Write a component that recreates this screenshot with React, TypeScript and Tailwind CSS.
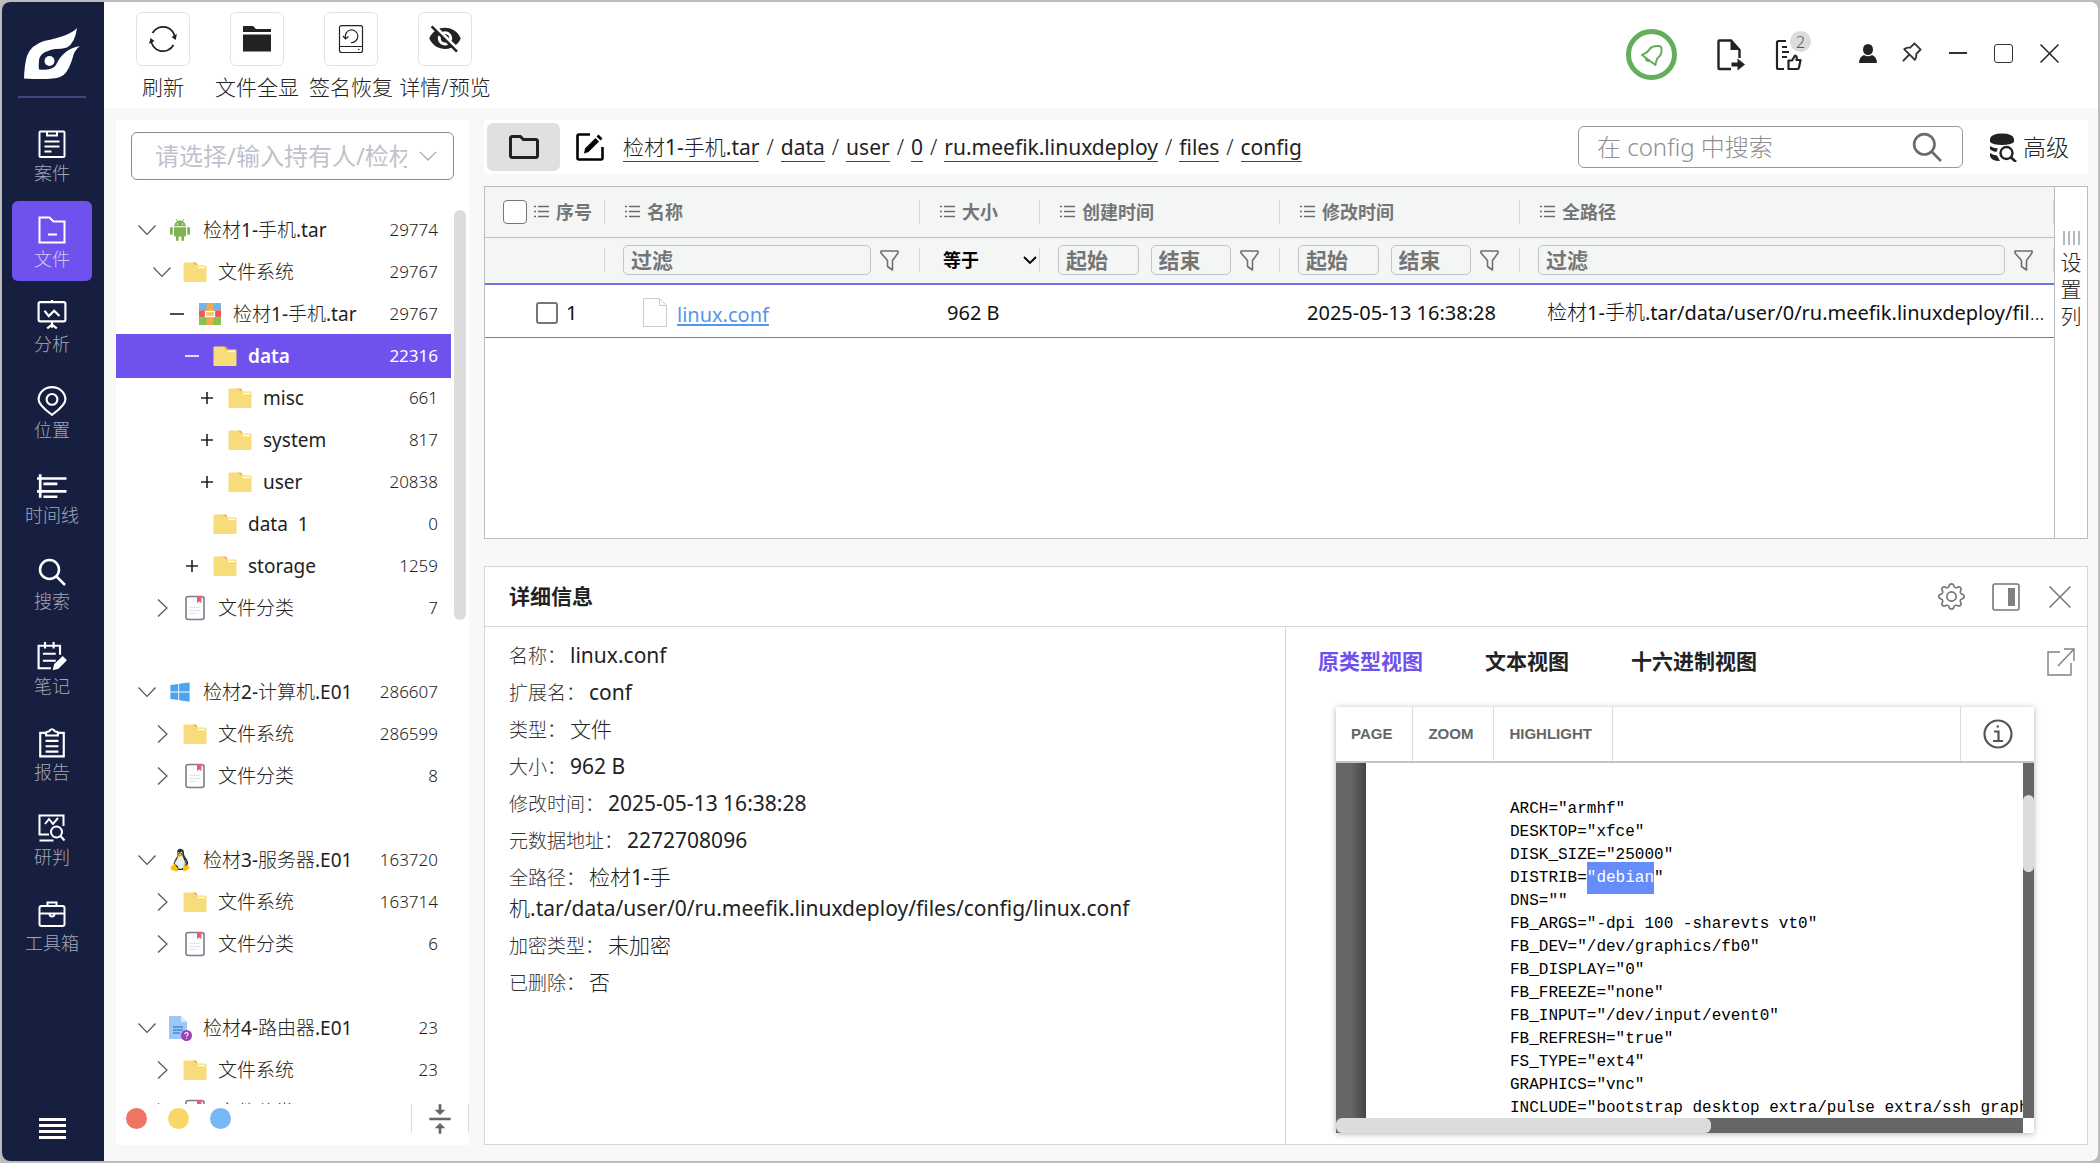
import type { ReactNode } from "react";
import clsx from "clsx";
import { AiOutlinePushpin } from "react-icons/ai";
import { BsGear } from "react-icons/bs";
import { FaWindows } from "react-icons/fa";
import { FcLinux } from "react-icons/fc";
import { IoMdEyeOff } from "react-icons/io";
import { MdOutlineFolder, MdVerticalAlignCenter } from "react-icons/md";

type IconProps = { className?: string };

function Svg({ className, children, box = 28, width = 2 }: IconProps & { children: ReactNode; box?: number; width?: number }) {
  return (
    <svg viewBox={`0 0 ${box} ${box}`} className={className} fill="none" stroke="currentColor" strokeWidth={width}>
      {children}
    </svg>
  );
}

function Logo({ className }: IconProps) {
  return (
    <svg viewBox="0 0 57 51" className={className} fill="#fff">
      <path d="M0 50.500Q.5 36 3 28Q7 17 20 13Q46 8 53 0Q51 15 43 19.500Q38 21 31 21Q15 24 15 33Q14.500 38 15 41.500Q28 43 32 37Q39 21 56 18Q50 22 48 32Q43 47 36 49Q28 52 0 50.500Z" />
      <circle cx="25.500" cy="33" r="5" />
    </svg>
  );
}

/* ---- sidebar icons ---- */

const CaseIcon = () => (
  <Svg className="size-7">
    <rect x="1.5" y="1.5" width="25" height="25.5" rx="1" />
    <path d="M9 1.500v4h10v-4M6.500 11.500h15M6.500 16.500h15M6.500 21.500h7" />
  </Svg>
);
const FileIcon = () => (
  <Svg className="size-7">
    <path d="M1.500 26.500v-25h10l4 4h11v21zM10 18.500h9" />
  </Svg>
);
const AnalysisIcon = () => (
  <Svg className="size-[30px]">
    <rect x="1.500" y="2" width="25" height="18" rx="1.500" />
    <path d="M7 10l4 5 5-5 5 5M14 0v2M14 20v6M9.500 26.500L14 23l4.500 3.500" />
  </Svg>
);
const PlaceIcon = () => (
  <Svg className="size-[30px]">
    <path d="M14 27C11 24.500 1.500 18 1.500 12.500a12.500 11.500 0 0 1 25 0C26.500 18 17 24.500 14 27z" />
    <circle cx="14" cy="12.500" r="5" />
  </Svg>
);
const TimelineIcon = () => (
  <Svg className="size-[30px]" width={2.500}>
    <path d="M3 3v22M0 7h27.500M6 12h13M0 19h27.500M6 24h13" />
  </Svg>
);
const SearchIcon = ({ className = "size-7" }: IconProps) => (
  <Svg className={className} width={2.500}>
    <circle cx="11.500" cy="11.500" r="9.500" />
    <path d="M18.500 18.500L27 27" />
  </Svg>
);
const NoteIcon = () => (
  <Svg className="size-[30px]">
    <path d="M13 24.500H1.500v-21h20V12M7.500 0v6M15.500 0v6M5.500 11h12M5.500 17.500h12" />
    <path d="M16 25l1-4 7-6.500 2.500 2.500-7 7z" fill="currentColor" />
  </Svg>
);
const ReportIcon = () => (
  <Svg className="size-[30px]">
    <path d="M8 4.500H3v22h22v-22h-5M8.500 7V4l3-1c1-2.500 4-2.500 5 0l3 1v3zM8 12h12M8 17h12M8 22h12" />
  </Svg>
);
const JudgeIcon = () => (
  <Svg className="size-7">
    <path d="M25.500 12V1.500h-24v19H11M1.500 26.500h14M7 10l4-5 4 5 5-6" />
    <circle cx="18.500" cy="18" r="5.500" />
    <path d="M22.500 22l4 4.500" />
  </Svg>
);
const ToolIcon = () => (
  <Svg className="size-7">
    <rect x="1.500" y="6" width="25" height="20" rx="2" />
    <path d="M9.500 6V2.500h9V6M1.500 13.500h25M11.500 13.500a2.500 3 0 0 0 5 0" />
  </Svg>
);

/* ---- toolbar icons ---- */

const RefreshIcon = () => (
  <Svg className="size-7" width={1.800}>
    <path d="M3.500 8a12 12 0 0 1 22.500 6M24.500 20a12 12 0 0 1-22.500-6" />
    <path d="M22.500 12l5.500-3-1.500 6zM5.500 16L0 19l1.500-6z" fill="currentColor" stroke="none" />
  </Svg>
);
const FolderSolidIcon = () => (
  <Svg className="size-7">
    <path d="M0 1h10l3 3h15v3H0zM0 9.500h28v17H0z" fill="#222" stroke="none" />
  </Svg>
);
const RestoreIcon = () => (
  <Svg className="size-7" width={1.200}>
    <rect x="2.500" y="0.600" width="23" height="27" rx="2" />
    <path d="M2.500 21.500h23M21 24.500h1.500M8.500 13a6.300 6.300 0 1 1 5.500 4.500M6 11l2.500 3 3-2.500" />
  </Svg>
);

/* ---- small shared icons ---- */

const Chevron = ({ open }: { open: boolean }) => (
  <svg viewBox="0 0 20 20" className="size-5" fill="none" stroke="#555" strokeWidth="1.200">
    <path d={open ? "M1.500 5.500L10 14.500l8.500-9" : "M6 1.500l9 8.500-9 8.500"} />
  </svg>
);
const ListIcon = () => (
  <svg viewBox="0 0 15 13" className="h-[13px] w-[15px] shrink-0" stroke="#6b6b6b" strokeWidth="1.300">
    <path d="M0 1.500h2M0 6.500h2M0 11.500h2M4 1.500h11M4 6.500h11M4 11.500h11" />
  </svg>
);
const Funnel = () => (
  <button type="button" aria-label="筛选" className="shrink-0">
    <svg viewBox="0 0 19 21" className="h-[21px] w-[19px]" fill="none" stroke="#6f6f6f" strokeWidth="1.600" strokeLinejoin="round">
      <path d="M1 1h17v2l-5.500 7.500V20l-5-3.500v-6L1 3z" />
    </svg>
  </button>
);
const FolderIcon = () => (
  <svg viewBox="0 0 24 21" className="h-[21px] w-6">
    <path d="M9 0.500h4l2 3H9z" fill="#efb054" />
    <path d="M0.500 1.500q0-1 1-1H10l3 3h9.500q1 0 1 1v14.500q0 1-1 1h-21q-1 0-1-1z" fill="#f8dc7c" />
    <path d="M15 5.500h7" stroke="#fff" strokeWidth="1.400" />
  </svg>
);
const CategoryIcon = () => (
  <svg viewBox="0 0 20 26" className="h-[26px] w-5">
    <rect x="1" y="1.500" width="18" height="23" rx="2.500" fill="#fdfdff" stroke="#7d7d85" strokeWidth="1.600" />
    <path d="M12 1h4.500v7l-2.200-1.500L12 8z" fill="#ee5a6f" />
    <path d="M5 12.500h10M5 15.500h10M5 18.500h7" stroke="#e2e2ea" />
  </svg>
);
const AndroidIcon = () => (
  <svg viewBox="0 0 20 22" className="h-[22px] w-5" fill="#7fb251">
    <path d="M4 7.300Q4.300 3.700 7 2.200L5.800.4l.5-.4 1.400 1.800q2.300-.8 4.600 0L13.700 0l.5.400L13 2.200q2.700 1.500 3 5.100z" />
    <path d="M4 8.200h12V16q0 1.500-1.500 1.500H14v3.200q0 1.300-1.300 1.300t-1.300-1.300v-3.200H8.600v3.200Q8.600 22 7.300 22T6 20.700v-3.200h-.5Q4 17.500 4 16z" />
    <rect x="0" y="8" width="2.800" height="8" rx="1.400" />
    <rect x="17.200" y="8" width="2.800" height="8" rx="1.400" />
    <circle cx="7.500" cy="5" r=".7" fill="#fff" />
    <circle cx="12.500" cy="5" r=".7" fill="#fff" />
  </svg>
);
const ArchiveIcon = () => (
  <svg viewBox="0 0 22 22" className="size-[22px]">
    <path d="M0 0h22v7.300H0z" fill="#6db7ee" />
    <path d="M0 7.300h22v7.300H0z" fill="#e75c57" />
    <path d="M0 14.600h22V22H0z" fill="#84c34e" />
    <path d="M7.500 0h7v22h-7z" fill="#f0a94b" />
    <rect x="6.500" y="8.500" width="9" height="5" fill="#f6c860" stroke="#fff" strokeWidth="1.300" />
  </svg>
);
const UnknownDiskIcon = () => (
  <svg viewBox="0 0 24 26" className="h-[26px] w-6">
    <path d="M1 1h12l6 6v17H1z" fill="#9cc6f6" />
    <path d="M13 1l6 6h-6z" fill="#dcebfc" />
    <path d="M5 12h10M5 15h10M5 18h7" stroke="#4d86d6" strokeWidth="1.500" />
    <circle cx="18.500" cy="20.500" r="5.500" fill="#9f3fb5" />
    <path d="M16.800 19.300c0-2.400 3.600-2.200 3.400 0-.1 1.200-1.700 1.200-1.700 2.300M18.500 22.800v1" fill="none" stroke="#fff" strokeWidth="1.100" />
  </svg>
);

const NAV = [
  { label: "案件", icon: <CaseIcon /> },
  { label: "文件", icon: <FileIcon /> },
  { label: "分析", icon: <AnalysisIcon /> },
  { label: "位置", icon: <PlaceIcon /> },
  { label: "时间线", icon: <TimelineIcon /> },
  { label: "搜索", icon: <SearchIcon /> },
  { label: "笔记", icon: <NoteIcon /> },
  { label: "报告", icon: <ReportIcon /> },
  { label: "研判", icon: <JudgeIcon /> },
  { label: "工具箱", icon: <ToolIcon /> },
];

const TOOLS = [
  { label: "刷新", icon: <RefreshIcon /> },
  { label: "文件全显", icon: <FolderSolidIcon /> },
  { label: "签名恢复", icon: <RestoreIcon /> },
  { label: "详情/预览", icon: <IoMdEyeOff className="size-9" /> },
];

type Node = {
  level: number;
  mark?: "open" | "closed" | "minus" | "plus";
  icon: ReactNode;
  label: string;
  count: number;
};

const fs = <FolderIcon />;
const cat = <CategoryIcon />;

const TREE: Node[][] = [
  [
    { level: 0, mark: "open", icon: <AndroidIcon />, label: "检材1-手机.tar", count: 29774 },
    { level: 1, mark: "open", icon: fs, label: "文件系统", count: 29767 },
    { level: 2, mark: "minus", icon: <ArchiveIcon />, label: "检材1-手机.tar", count: 29767 },
    { level: 3, mark: "minus", icon: fs, label: "data", count: 22316 },
    { level: 4, mark: "plus", icon: fs, label: "misc", count: 661 },
    { level: 4, mark: "plus", icon: fs, label: "system", count: 817 },
    { level: 4, mark: "plus", icon: fs, label: "user", count: 20838 },
    { level: 3, icon: fs, label: "data  1", count: 0 },
    { level: 3, mark: "plus", icon: fs, label: "storage", count: 1259 },
    { level: 1, mark: "closed", icon: cat, label: "文件分类", count: 7 },
  ],
  [
    { level: 0, mark: "open", icon: <FaWindows className="size-[22px] text-[#4ea3ee]" />, label: "检材2-计算机.E01", count: 286607 },
    { level: 1, mark: "closed", icon: fs, label: "文件系统", count: 286599 },
    { level: 1, mark: "closed", icon: cat, label: "文件分类", count: 8 },
  ],
  [
    { level: 0, mark: "open", icon: <FcLinux className="size-[30px] shrink-0" />, label: "检材3-服务器.E01", count: 163720 },
    { level: 1, mark: "closed", icon: fs, label: "文件系统", count: 163714 },
    { level: 1, mark: "closed", icon: cat, label: "文件分类", count: 6 },
  ],
  [
    { level: 0, mark: "open", icon: <UnknownDiskIcon />, label: "检材4-路由器.E01", count: 23 },
    { level: 1, mark: "closed", icon: fs, label: "文件系统", count: 23 },
    { level: 1, mark: "closed", icon: cat, label: "文件分类", count: 0 },
  ],
];

const INDENT = ["pl-[21px]", "pl-9", "pl-[51px]", "pl-[66px]", "pl-[81px]"];

const CRUMBS = ["检材1-手机.tar", "data", "user", "0", "ru.meefik.linuxdeploy", "files", "config"];

const DETAILS = [
  ["名称", "linux.conf"],
  ["扩展名", "conf"],
  ["类型", "文件"],
  ["大小", "962 B"],
  ["修改时间", "2025-05-13 16:38:28"],
  ["元数据地址", "2272708096"],
  ["全路径", "检材1-手机.tar/data/user/0/ru.meefik.linuxdeploy/files/config/linux.conf"],
  ["加密类型", "未加密"],
  ["已删除", "否"],
];

const CONF = [
  'ARCH="armhf"',
  'DESKTOP="xfce"',
  'DISK_SIZE="25000"',
  'DISTRIB="debian"',
  'DNS=""',
  'FB_ARGS="-dpi 100 -sharevts vt0"',
  'FB_DEV="/dev/graphics/fb0"',
  'FB_DISPLAY="0"',
  'FB_FREEZE="none"',
  'FB_INPUT="/dev/input/event0"',
  'FB_REFRESH="true"',
  'FS_TYPE="ext4"',
  'GRAPHICS="vnc"',
  'INCLUDE="bootstrap desktop extra/pulse extra/ssh graphics"',
];
const HIT = '"debian';

// Chinese runs stay light, Latin runs and digits go one step heavier
function Mixed({ text }: { text: string }) {
  return (
    <>
      {text.split(/([\u4e00-\u9fff]+)/).filter(Boolean).map((run, i) =>
        /[\u4e00-\u9fff]/.test(run) ? run : <span key={i} className="font-normal">{run}</span>,
      )}
    </>
  );
}

function Sidebar() {
  return (
    <nav className="flex w-[102px] shrink-0 flex-col items-center bg-[#171f40] pt-[26px] pr-0.5 pb-[22px]">
      <Logo className="h-[51px] w-[57px]" />
      <div className="mt-[17px] h-0.5 w-[68px] bg-[#3c4680]" />
      <div className="mt-[17px] flex h-[850px] flex-col justify-between">
        {NAV.map((n) => (
          <a
            key={n.label}
            href="#"
            className={clsx(
              "flex size-20 flex-col items-center rounded-md pt-3.5",
              n.label === "文件" ? "bg-[#6f52ee] text-[#cfc6f8]" : "text-[#a3a7b6]",
            )}
          >
            <span className="flex h-[30px] items-center justify-center text-white">{n.icon}</span>
            <span className="text-lg leading-7">{n.label}</span>
          </a>
        ))}
      </div>
      <button type="button" aria-label="菜单" className="mt-auto">
        <svg viewBox="0 0 27 21" className="h-[21px] w-[27px]" stroke="#fff" strokeWidth="3">
          <path d="M0 1.500h27M0 7.500h27M0 13.500h27M0 19.500h27" />
        </svg>
      </button>
    </nav>
  );
}

function Header() {
  return (
    <header className="flex h-[106px] shrink-0 items-start justify-between bg-white pr-[39px] pl-3">
      <div className="flex pt-2.5">
        {TOOLS.map((t) => (
          <button key={t.label} type="button" className="flex w-[94px] flex-col items-center">
            <span className="flex size-[54px] items-center justify-center rounded-md border border-[#e3e3e3]">{t.icon}</span>
            <span className="mt-1.5 text-[21px] leading-[30px] whitespace-nowrap">{t.label}</span>
          </button>
        ))}
      </div>
      <div className="flex h-[104px] items-start pt-[27px]">
        <button type="button" aria-label="通知" className="flex size-[51px] items-center justify-center rounded-full border-[5px] border-[#64ad5b] text-[#64ad5b]">
          <svg viewBox="0 0 24 24" className="size-6" fill="none" stroke="currentColor" strokeWidth="2" strokeLinejoin="round">
            <path d="M2 12Q8 9.500 10 5.500Q13 2.500 19 3Q22 3 21.500 8Q21 13 17.500 15Q16 18 15.500 22z" />
            <path d="M6 15Q5.500 18.500 9.500 18" />
          </svg>
        </button>
        <button type="button" aria-label="导出" className="mt-2.5 ml-10">
          <svg viewBox="0 0 28 32" className="h-8 w-7" fill="none" stroke="#222" strokeWidth="2.400">
            <path d="M14 30H2.500q-1 0-1-1V2.500q0-1 1-1H14L22.500 11v8" />
            <path d="M13.500 1.500V11h9.500z" fill="#222" stroke="none" />
            <path d="M14.500 23.500h6v-4l7.500 6-7.500 6v-4h-6z" fill="#222" stroke="none" />
          </svg>
        </button>
        <button type="button" aria-label="标记" className="relative mt-2.5 ml-[30px]">
          <svg viewBox="0 0 27 32" className="h-8 w-[27px]" fill="none" stroke="#222" strokeWidth="2.200">
            <path d="M9 30H3.500q-1.500 0-1.500-1.500V3.500Q2 2 3.500 2H11M7 8h5M7 13h7M7 18h5" />
            <path d="M13.500 21.500h3.500l3-5q2.500.5 1.500 4.500h4l-1.500 7.500q-.3 1.500-1.500 1.500h-9z" strokeLinejoin="round" />
          </svg>
          <span className="absolute -top-2 left-[15px] flex size-[21px] items-center justify-center rounded-full bg-[#dcdcdc] text-base text-[#555]">2</span>
        </button>
        <button type="button" aria-label="用户" className="mt-[15px] ml-[57px]">
          <svg viewBox="0 0 18 19" className="h-[19px] w-[18px]" fill="#222">
            <ellipse cx="9" cy="5.500" rx="5" ry="5.500" />
            <path d="M0 19q0-6 5-8 4 2.500 8 0 5 2 5 8z" />
          </svg>
        </button>
        <button type="button" aria-label="置顶" className="mt-2.5 ml-[22px]">
          <AiOutlinePushpin className="size-[26px] text-[#333]" />
        </button>
        <button type="button" aria-label="最小化" className="mt-3 ml-6 flex h-6 items-center">
          <span className="h-0.5 w-[18px] bg-[#333]" />
        </button>
        <button type="button" aria-label="最大化" className="mt-[15px] ml-[27px] size-[19px] rounded-[3px] border border-[#333]" />
        <button type="button" aria-label="关闭" className="mt-[15px] ml-[27px]">
          <svg viewBox="0 0 19 19" className="size-[19px]" stroke="#222" strokeWidth="1.500">
            <path d="M.5.500l18 18M18.500.500l-18 18" />
          </svg>
        </button>
      </div>
    </header>
  );
}

function TreeRow({ node }: { node: Node }) {
  const selected = node.label === "data";
  return (
    <li
      className={clsx(
        "flex items-center gap-[11px] pr-[13px]",
        INDENT[node.level],
        selected ? "-my-px h-11 bg-[#6f52ee] text-white" : "h-[42px] text-[#222]",
      )}
    >
      <span className="flex w-5 shrink-0 items-center justify-center">
        {(node.mark === "open" || node.mark === "closed") && <Chevron open={node.mark === "open"} />}
        {(node.mark === "minus" || node.mark === "plus") && (
          <svg viewBox="0 0 14 14" className="size-3.5" stroke="currentColor" strokeWidth="1.600">
            <path d={node.mark === "minus" ? "M0 7h14" : "M1 7h12M7 1v12"} />
          </svg>
        )}
      </span>
      <span className="flex w-6 shrink-0 items-center justify-center">{node.icon}</span>
      <span className={clsx("flex-1 text-[19px] whitespace-pre", selected && "font-semibold")}>
        {selected ? node.label : <Mixed text={node.label} />}
      </span>
      <span className={clsx("text-[17px]", selected && "font-normal")}>{node.count}</span>
    </li>
  );
}

function TreePanel() {
  return (
    <aside className="flex w-[353px] shrink-0 flex-col bg-white pt-3">
      <div className="mx-[15px] flex h-12 w-[323px] shrink-0 items-center rounded-md border border-[#8c8c8c] pr-4 pl-[23px]">
        <input
          aria-label="持有人/检材"
          placeholder="请选择/输入持有人/检材"
          className="w-[252px] text-2xl font-normal outline-none placeholder:text-[#bfc2cb]"
        />
        <svg viewBox="0 0 18 18" className="ml-auto size-[18px]" fill="none" stroke="#a9acb6" strokeWidth="1.300">
          <path d="M1 5l8 8 8-8" />
        </svg>
      </div>
      <div className="mt-[29px] flex min-h-0 flex-1 overflow-hidden">
        <ul className="flex-1 space-y-[42px]">
          {TREE.map((group, i) => (
            <li key={i}>
              <ul>
                {group.map((n) => (
                  <TreeRow key={n.level + n.label} node={n} />
                ))}
              </ul>
            </li>
          ))}
        </ul>
        <div className="mt-px mr-[3px] ml-[3px] h-[410px] w-3 rounded-full bg-[#dcdcdc]" />
      </div>
      <div className="flex h-[41px] shrink-0 items-start pl-2.5">
        <div className="flex gap-[21px] pt-1">
          <button type="button" aria-label="红色标签" className="size-[21px] rounded-full bg-[#ef7462]" />
          <button type="button" aria-label="黄色标签" className="size-[21px] rounded-full bg-[#f8d767]" />
          <button type="button" aria-label="蓝色标签" className="size-[21px] rounded-full bg-[#74b9f6]" />
        </div>
        <button type="button" aria-label="折叠" className="ml-auto flex h-[29px] w-[58px] items-center justify-center border-x border-[#dcdcdc] text-[#666]">
          <MdVerticalAlignCenter className="size-8" />
        </button>
      </div>
    </aside>
  );
}

function PathBar() {
  return (
    <div className="flex h-[54px] shrink-0 items-center bg-white pr-[19px] pl-[3px]">
      <button type="button" aria-label="文件夹" className="flex h-12 w-[73px] items-center justify-center rounded-md bg-[#e0e0e0]">
        <MdOutlineFolder className="size-9 text-[#222]" />
      </button>
      <button type="button" aria-label="编辑路径" className="ml-4">
        <svg viewBox="0 0 28 28" className="size-7" fill="none" stroke="#000" strokeWidth="2.600">
          <path d="M14 1.500H3q-1.500 0-1.500 1.500v22q0 1.500 1.500 1.500h22q1.500 0 1.500-1.500V14" />
          <path d="M8 20.500l1-5L19.500 5l3.500 3.500L12.500 19zM20.500 3.500L22.500 1.500l4 4-2 2z" fill="#000" stroke="none" />
        </svg>
      </button>
      <nav className="ml-[19px] flex text-[21px] leading-7 text-[#222]">
        {CRUMBS.map((c, i) => (
          <span key={c}>
            {i > 0 && <span className="mx-[7px]">/</span>}
            <a href="#" className="inline-block border-b border-[#444]"><Mixed text={c} /></a>
          </span>
        ))}
      </nav>
      <div className="ml-auto flex h-[42px] w-[385px] items-center rounded-md border border-[#999] pr-5 pl-[18px]">
        <input aria-label="搜索" placeholder="在 config 中搜索" className="min-w-0 flex-1 text-2xl outline-none placeholder:text-[#8f8f8f]" />
        <SearchIcon className="size-[30px] text-[#6b6b6b]" />
      </div>
      <button type="button" className="ml-[26px] flex items-center gap-1.5 text-[23px]">
        <svg viewBox="0 0 28 29" className="h-[29px] w-7" fill="#222">
          <path d="M1 6q1-5.500 12-5.500T25 6v3q-3 3-12 3T1 9zM1 13q3 2 8 2.500-1.500 2-1.500 3.500Q2 18 1 16zM1 20q3 2 7 2.500l3 5.500Q2 28 1 23z" />
          <circle cx="17.500" cy="20" r="6" fill="none" stroke="#222" strokeWidth="2.400" />
          <path d="M21.500 24l5.500 5" stroke="#222" strokeWidth="2.600" />
        </svg>
        高级
      </button>
    </div>
  );
}

const COLUMNS = ["序号", "名称", "大小", "创建时间", "修改时间", "全路径"];

const filterInput =
  "h-[30px] w-full min-w-0 rounded-[5px] border border-[#c2c4c6] px-[7px] text-[21px] font-bold outline-none placeholder:text-[#757575]";

function DateFilter({ name }: { name: string }) {
  return (
    <div className="flex items-center gap-[9px]">
      <div className="flex flex-1 gap-3">
        <input aria-label={`${name}起始`} placeholder="起始" className={filterInput} />
        <input aria-label={`${name}结束`} placeholder="结束" className={filterInput} />
      </div>
      <Funnel />
    </div>
  );
}

function TextFilter({ name }: { name: string }) {
  return (
    <div className="flex items-center gap-[9px]">
      <input aria-label={name} placeholder="过滤" className={filterInput} />
      <Funnel />
    </div>
  );
}

// short divider on the right edge of header cells
function Cell({ children, className }: { children?: ReactNode; className: string }) {
  return (
    <th className="p-0 font-bold">
      <div className="flex items-center">
        <div className={clsx("min-w-0 flex-1", className)}>{children}</div>
        <span className="h-6 w-px bg-[#d3d5d7]" />
      </div>
    </th>
  );
}

function FileTable() {
  return (
    <section className="flex h-[353px] shrink-0 border border-[#b9bdc2] bg-white">
      <div className="min-w-0 flex-1">
        <table className="w-full table-fixed text-left">
          <colgroup>
            <col className="w-[120px]" />
            <col className="w-[315px]" />
            <col className="w-[120px]" />
            <col className="w-[240px]" />
            <col className="w-[240px]" />
            <col />
          </colgroup>
          <thead className="bg-[#f4f6f6]">
            <tr className="h-[50px] border-b border-[#bcc0c4]">
              {COLUMNS.map((c, i) => (
                <Cell key={c} className={clsx("flex items-center", i === 0 ? "gap-[7px] pl-[18px]" : "gap-[7px] pl-5")}>
                  {i === 0 && <input type="checkbox" aria-label="全选" className="size-6 appearance-none rounded-[4px] border border-[#777] bg-white" />}
                  <ListIcon />
                  <span className="text-lg text-[#757575]">{c}</span>
                </Cell>
              ))}
            </tr>
            <tr className="h-[47px] border-b-2 border-[#7470e8]">
              <Cell className="pl-5" />
              <Cell className="pr-5 pl-[18px]"><TextFilter name="名称过滤" /></Cell>
              <Cell className="flex items-center pr-0.5 pl-[23px]">
                <select aria-label="大小条件" className="min-w-0 flex-1 appearance-none text-lg font-bold text-black outline-none">
                  <option>等于</option>
                </select>
                <svg viewBox="0 0 14 14" className="size-3.5" fill="none" stroke="#000" strokeWidth="1.800">
                  <path d="M1 4l6 6 6-6" />
                </svg>
              </Cell>
              <Cell className="pr-5 pl-[18px]"><DateFilter name="创建时间" /></Cell>
              <Cell className="pr-5 pl-[18px]"><DateFilter name="修改时间" /></Cell>
              <Cell className="pr-5 pl-[18px]"><TextFilter name="全路径过滤" /></Cell>
            </tr>
          </thead>
          <tbody className="text-xl text-[#111]">
            <tr className="h-[53px] border-b border-[#7470e8]">
              <td className="p-0 pt-1 pl-[51px]">
                <label className="flex items-center gap-2 font-normal">
                  <input type="checkbox" className="size-[22px] appearance-none rounded-[3px] border-2 border-[#767676]" />1
                </label>
              </td>
              <td className="p-0 pt-1 pl-[38px]">
                <div className="flex items-center gap-2.5">
                  <svg viewBox="0 0 24 29" className="h-[29px] w-6" fill="#fff" stroke="#c9ccd2">
                    <path d="M.5.500h16l7 7v21H.5zM16.500.500v7h7" />
                  </svg>
                  <a href="#" className="pt-1 font-normal text-[#5596e8] underline decoration-2 underline-offset-2">linux.conf</a>
                </div>
              </td>
              <td className="p-0 pt-1 pl-[27px] font-normal">962 B</td>
              <td />
              <td className="p-0 pt-1 pl-[27px] font-normal whitespace-nowrap">2025-05-13 16:38:28</td>
              <td className="truncate pt-1 pr-1 pb-0 pl-[27px]">
                <Mixed text="检材1-手机.tar/data/user/0/ru.meefik.linuxdeploy/files/config/linux.conf" />
              </td>
            </tr>
          </tbody>
        </table>
      </div>
      <button type="button" className="flex w-[33px] flex-col items-center border-l border-[#b9bdc2] pt-11">
        <svg viewBox="0 0 17 14" className="h-3.5 w-[17px]" stroke="#8d959b" strokeWidth="1.300">
          <path d="M1 0v14M6 0v14M11 0v14M16 0v14" />
        </svg>
        <span className="mt-1 w-[21px] text-[21px] leading-[27px]">设置列</span>
      </button>
    </section>
  );
}

function ConfLine({ text }: { text: string }) {
  const at = text.indexOf(HIT);
  if (at < 0) return <>{text}</>;
  return (
    <>
      {text.slice(0, at)}
      <span className="bg-[rgba(0,64,245,0.6)] py-[7px] text-white">{HIT}</span>
      {text.slice(at + HIT.length)}
    </>
  );
}

function Viewer() {
  return (
    <div className="mr-[53px] ml-[50px] flex min-h-0 flex-1 flex-col bg-white shadow-[0_1px_6px_rgba(0,0,0,0.3)]">
      <div className="flex h-14 shrink-0 border-b-2 border-[#c4c4c4] font-['Liberation_Sans',sans-serif] text-[15px] font-bold text-[#666]">
        {["PAGE", "ZOOM", "HIGHLIGHT"].map((b) => (
          <button key={b} type="button" className="border-r border-[#dcdcdc] pr-5 pl-[15px]">{b}</button>
        ))}
        <button type="button" aria-label="信息" className="ml-auto flex w-[74px] items-center justify-center border-l border-[#dcdcdc]">
          <svg viewBox="0 0 30 30" className="size-[30px]" fill="none" stroke="#555" strokeWidth="2.200">
            <circle cx="15" cy="15" r="13.500" />
            <path d="M11 12.500h4.500v9M10 22h10M13.500 7.500h2.500" />
          </svg>
        </button>
      </div>
      <div className="flex min-h-0 flex-1">
        <div className="w-[30px] shrink-0 bg-linear-to-r from-[#666] from-50% to-[#454545]" />
        <pre className="min-w-0 flex-1 overflow-hidden pt-[35px] pl-36 font-['Liberation_Mono',monospace] text-base leading-[23px] text-black">
          {CONF.map((line) => (
            <div key={line}><ConfLine text={line} /></div>
          ))}
        </pre>
        <div className="w-[11px] shrink-0 bg-[#666] pt-8">
          <div className="h-[77px] rounded-full bg-[#dcdcdc]" />
        </div>
      </div>
      <div className="mr-[11px] h-[15px] shrink-0 bg-[#666]">
        <div className="h-full w-[375px] rounded-md bg-[#dcdcdc]" />
      </div>
    </div>
  );
}

function DetailPanel() {
  return (
    <section className="flex min-h-0 flex-1 flex-col border border-[#d6d6d6] bg-white">
      <div className="flex h-[60px] shrink-0 items-center border-b border-[#d6d6d6] pr-4 pl-6 text-[#777]">
        <h2 className="mr-auto text-[21px] font-bold text-[#222]">详细信息</h2>
        <button type="button" aria-label="设置"><BsGear className="size-[27px]" /></button>
        <button type="button" aria-label="切换布局" className="ml-[27px]">
          <svg viewBox="0 0 28 28" className="size-7" fill="none" stroke="currentColor" strokeWidth="1.600">
            <rect x="1" y="1" width="26" height="26" rx="2" />
            <path d="M16 5h7v18h-7z" fill="#808080" stroke="none" />
          </svg>
        </button>
        <button type="button" aria-label="关闭详情" className="ml-[29px]">
          <svg viewBox="0 0 22 22" className="size-[22px]" stroke="currentColor" strokeWidth="1.500">
            <path d="M.5.500l21 21M21.500.500l-21 21" />
          </svg>
        </button>
      </div>
      <div className="flex min-h-0 flex-1">
        <dl className="flex w-1/2 shrink-0 flex-col gap-1.5 border-r border-[#d6d6d6] pt-[13px] pr-6 pl-6 text-[#222]">
          {DETAILS.map(([k, v]) => (
            <div key={k} className="text-[21px] leading-[31px]">
              <dt className="mr-1 inline text-[19px] leading-none text-[#333]">{k}：</dt>
              <dd className="inline"><Mixed text={v} /></dd>
            </div>
          ))}
        </dl>
        <div className="flex min-w-0 flex-1 flex-col pb-[11px]">
          <div className="flex h-20 shrink-0 items-start gap-[62px] pt-[19px] pr-3 pl-8 text-[21px] leading-[31px] font-bold text-[#222]">
            <button type="button" className="text-[#6f52ee]">原类型视图</button>
            <button type="button">文本视图</button>
            <button type="button">十六进制视图</button>
            <button type="button" aria-label="新窗口打开" className="mt-0.5 ml-auto">
              <svg viewBox="0 0 28 28" className="size-7" fill="none" stroke="#808080" strokeWidth="1.400">
                <path d="M13 4H1v23h23V15M17 1h10v12M27 1L11 18" />
              </svg>
            </button>
          </div>
          <Viewer />
        </div>
      </div>
    </section>
  );
}

export default function App() {
  return (
    <div className="h-screen bg-[#bcbcbc] p-0.5 font-['Noto_Sans','Noto_Sans_CJK_SC',sans-serif] font-light text-[#222]">
      <div className="flex h-full overflow-hidden rounded-lg bg-[#f8f8f8]">
        <Sidebar />
        <div className="flex min-w-0 flex-1 flex-col">
          <Header />
          <main className="flex min-h-0 flex-1 gap-[15px] pt-3 pr-2.5 pb-4 pl-3">
            <TreePanel />
            <div className="flex min-w-0 flex-1 flex-col">
              <PathBar />
              <div className="mt-3 mb-[27px]">
                <FileTable />
              </div>
              <DetailPanel />
            </div>
          </main>
        </div>
      </div>
    </div>
  );
}
